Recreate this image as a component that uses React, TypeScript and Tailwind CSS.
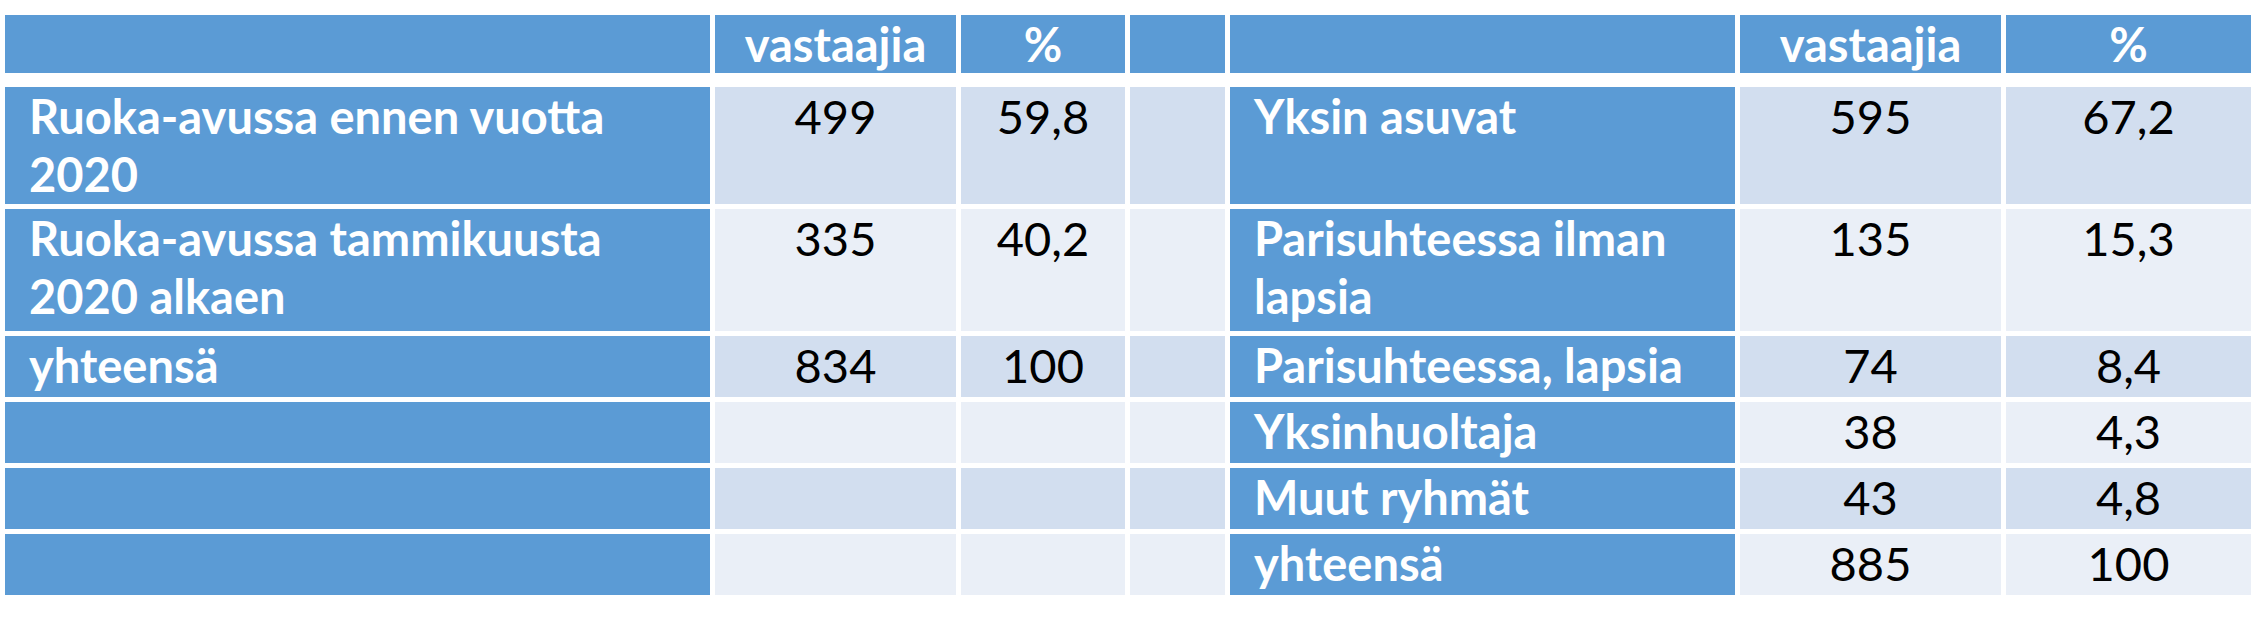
import React from 'react';

const cols = 'grid grid-cols-[705px_241px_164px_95px_505px_261px_245px] gap-[5px]';

type Row = {
  left: React.ReactNode;
  lv: string;
  lp: string;
  right: React.ReactNode;
  rv: string;
  rp: string;
  h: string;
};

const rows: Row[] = [
  {
    left: (
      <>
        Ruoka-avussa ennen vuotta
        <br />
        2020
      </>
    ),
    lv: '499',
    lp: '59,8',
    right: 'Yksin asuvat',
    rv: '595',
    rp: '67,2',
    h: 'h-[117px]',
  },
  {
    left: (
      <>
        Ruoka-avussa tammikuusta
        <br />
        2020 alkaen
      </>
    ),
    lv: '335',
    lp: '40,2',
    right: (
      <>
        Parisuhteessa ilman
        <br />
        lapsia
      </>
    ),
    rv: '135',
    rp: '15,3',
    h: 'h-[122px]',
  },
  { left: 'yhteensä', lv: '834', lp: '100', right: 'Parisuhteessa, lapsia', rv: '74', rp: '8,4', h: 'h-[61px]' },
  { left: '', lv: '', lp: '', right: 'Yksinhuoltaja', rv: '38', rp: '4,3', h: 'h-[61px]' },
  { left: '', lv: '', lp: '', right: 'Muut ryhmät', rv: '43', rp: '4,8', h: 'h-[61px]' },
  { left: '', lv: '', lp: '', right: 'yhteensä', rv: '885', rp: '100', h: 'h-[61px]' },
];

export default function App() {
  return (
    <div className="h-[625px] w-[2265px] bg-white pl-[5px] pt-[15px] font-['Lato','Liberation_Sans',sans-serif] text-[47px] leading-[58px]">
      {/* otsikkorivi */}
      <div className={`${cols} h-[58px]`}>
        <div className="bg-[#5b9bd5]" />
        <div className="bg-[#5b9bd5] text-center font-bold text-white">vastaajia</div>
        <div className="bg-[#5b9bd5] text-center font-bold text-white">%</div>
        <div className="bg-[#5b9bd5]" />
        <div className="bg-[#5b9bd5]" />
        <div className="bg-[#5b9bd5] text-center font-bold text-white">vastaajia</div>
        <div className="bg-[#5b9bd5] text-center font-bold text-white">%</div>
      </div>

      <div className="mt-[14px] flex flex-col gap-[5px]">
        {rows.map((r, i) => {
          const light = i % 2 === 0 ? 'bg-[#d2deef]' : 'bg-[#eaeff7]';
          return (
            <div key={i} className={`${cols} ${r.h}`}>
              <div className="whitespace-nowrap bg-[#5b9bd5] pl-[24px] font-bold text-white">{r.left}</div>
              <div className={`${light} text-center text-black`}>{r.lv}</div>
              <div className={`${light} text-center text-black`}>{r.lp}</div>
              <div className={light} />
              <div className="whitespace-nowrap bg-[#5b9bd5] pl-[24px] font-bold text-white">{r.right}</div>
              <div className={`${light} text-center text-black`}>{r.rv}</div>
              <div className={`${light} text-center text-black`}>{r.rp}</div>
            </div>
          );
        })}
      </div>
    </div>
  );
}
